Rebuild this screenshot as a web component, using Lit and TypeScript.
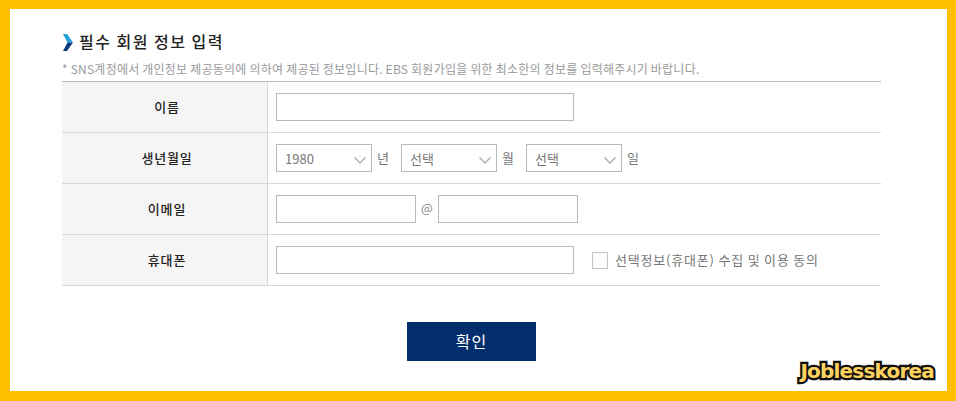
import { LitElement, html, css } from "lit";
import { customElement } from "lit/decorators.js";

@customElement("app-root")
export class AppRoot extends LitElement {
  static styles = css`
    :host {
      display: block;
      box-sizing: border-box;
      width: 956px;
      height: 401px;
      position: relative;
      background: #fff;
      border: solid #ffc000;
      border-width: 9px 9px 10px 10px;
      font-family: "Noto Sans CJK KR", "Noto Sans", sans-serif;
      overflow: hidden;
    }
    .content {
      padding: 22px 0 0 52px;
      width: 819px;
    }
    .title {
      display: flex;
      align-items: center;
      gap: 6px;
      height: 20px;
      font-size: 16px;
      font-weight: 500;
      color: #222;
      letter-spacing: 1.5px;
      line-height: 20px;
    }
    .title svg { display: block; flex: none; margin: 2px 0 0 1px; }
    .note {
      margin-top: 10px;
      height: 20px;
      font-size: 12px;
      line-height: 16px;
      color: #999;
      letter-spacing: 0.22px;
      white-space: nowrap;
    }
    .table {
      border-top: 1px solid #b9b9b9;
    }
    .row {
      display: grid;
      grid-template-columns: 206px 1fr;
      height: 51px;
      box-sizing: border-box;
      border-bottom: 1px solid #d9d9d9;
    }
    .th {
      background: #f5f5f5;
      border-right: 1px solid #d9d9d9;
      display: flex;
      align-items: center;
      justify-content: center;
      font-size: 13px;
      font-weight: 500;
      color: #222;
      letter-spacing: 0.8px;
      padding: 0 0 2px 5px;
    }
    .td {
      display: flex;
      align-items: center;
      padding-left: 8px;
      font-size: 13px;
      color: #777;
    }
    input[type="text"] {
      box-sizing: border-box;
      height: 28px;
      border: 1px solid #b9b9b9;
      background: #fff;
      margin: 0;
      padding: 0 8px;
      outline: none;
      border-radius: 0;
    }
    .w298 { width: 298px; }
    .w140 { width: 140px; }
    .sel {
      position: relative;
      width: 96px;
      height: 28px;
    }
    .sel select {
      appearance: none;
      -webkit-appearance: none;
      box-sizing: border-box;
      width: 96px;
      height: 28px;
      margin: 0;
      border: 1px solid #b9b9b9;
      border-radius: 0;
      background: #fff;
      padding: 0 0 0 8px;
      font-family: inherit;
      font-size: 13px;
      color: #777;
      outline: none;
    }
    .sel svg {
      position: absolute;
      right: 6px;
      top: 13px;
      pointer-events: none;
    }
    .unit { margin: 0 0 2px 5px; width: 24px; color: #777; }
    .unit.last { width: auto; }
    .at { width: 22px; margin-bottom: 4px; text-align: center; font-size: 12.5px; color: #888; }
    .check {
      appearance: none;
      -webkit-appearance: none;
      box-sizing: border-box;
      width: 16px;
      height: 17px;
      margin: 0 7px 0 18px;
      border: 1px solid #c4c4c4;
      background: #fdfcfe;
      border-radius: 0;
    }
    .agree {
      font-size: 13px;
      color: #777;
      letter-spacing: 0.8px;
      margin-bottom: 2px;
    }
    .actions {
      display: flex;
      justify-content: center;
      padding-top: 36px;
    }
    button {
      width: 129px;
      height: 39px;
      border: none;
      margin: 0;
      padding: 0 0 2px;
      background: #032e6e;
      color: #fff;
      font-family: inherit;
      font-size: 16px;
      letter-spacing: 1px;
    }
    .mark {
      position: absolute;
      right: 13px;
      bottom: 9px;
      font-family: "DejaVu Sans", sans-serif;
      font-weight: 700;
      font-size: 20px;
      line-height: 22px;
      letter-spacing: -0.8px;
      color: #ffd35f;
      -webkit-text-stroke: 4.5px #111;
      paint-order: stroke fill;
      white-space: nowrap;
    }
  `;

  private chevron() {
    return html`<svg width="12" height="7" viewBox="0 0 12 7" fill="none" aria-hidden="true">
      <path d="M0.5 0.5 L6 6 L11.5 0.5" stroke="#b0b0b0" stroke-width="1.5"></path>
    </svg>`;
  }

  private select(value: string) {
    return html`<div class="sel">
      <select><option>${value}</option></select>
      ${this.chevron()}
    </div>`;
  }

  render() {
    return html`
      <div class="content">
        <div class="title">
          <svg width="10" height="17" viewBox="0 0 10 17" aria-hidden="true">
            <polygon points="0,0 4,0 10,8.5 4.5,8.5" fill="#22a2dc"></polygon>
            <polygon points="4.5,8.5 10,8.5 4,17 0,17" fill="#0b3a78"></polygon>
          </svg>
          <span>필수 회원 정보 입력</span>
        </div>
        <div class="note">* SNS계정에서 개인정보 제공동의에 의하여 제공된 정보입니다. EBS 회원가입을 위한 최소한의 정보를 입력해주시기 바랍니다.</div>
        <div class="table">
          <div class="row">
            <div class="th">이름</div>
            <div class="td"><input class="w298" type="text" /></div>
          </div>
          <div class="row">
            <div class="th">생년월일</div>
            <div class="td">
              ${this.select("1980")}<span class="unit">년</span>
              ${this.select("선택")}<span class="unit">월</span>
              ${this.select("선택")}<span class="unit last">일</span>
            </div>
          </div>
          <div class="row">
            <div class="th">이메일</div>
            <div class="td">
              <input class="w140" type="text" /><span class="at">@</span><input class="w140" type="text" />
            </div>
          </div>
          <div class="row">
            <div class="th">휴대폰</div>
            <div class="td">
              <input class="w298" type="text" />
              <input class="check" type="checkbox" />
              <span class="agree">선택정보(휴대폰) 수집 및 이용 동의</span>
            </div>
          </div>
        </div>
        <div class="actions"><button>확인</button></div>
      </div>
      <div class="mark">Joblesskorea</div>
    `;
  }
}
